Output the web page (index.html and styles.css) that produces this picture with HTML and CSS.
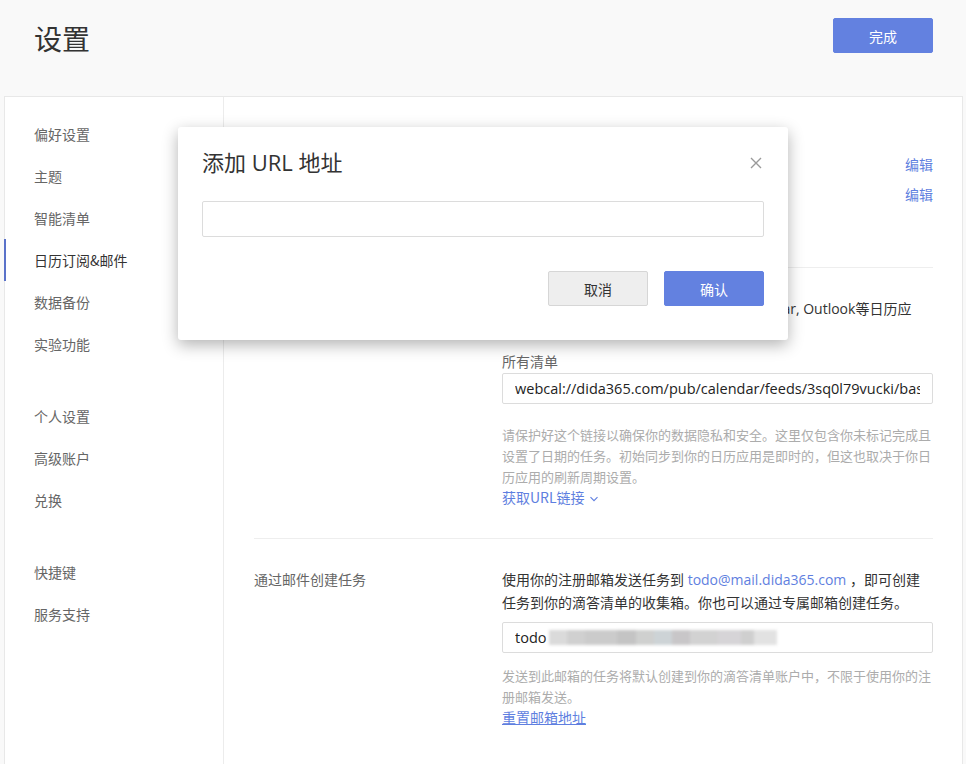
FILE: index.html
```html
<!DOCTYPE html>
<html lang="zh-CN">
<head>
<meta charset="utf-8">
<title>设置</title>
<link rel="stylesheet" href="styles.css">
</head>
<body>
<div class="page">
  <header class="top">
    <h1 class="page-title">设置</h1>
    <button class="btn btn-primary btn-done">完成</button>
  </header>

  <div class="card">
    <nav class="side">
      <ul class="group">
        <li class="nav-item">偏好设置</li>
        <li class="nav-item">主题</li>
        <li class="nav-item">智能清单</li>
        <li class="nav-item active">日历订阅&amp;邮件</li>
        <li class="nav-item">数据备份</li>
        <li class="nav-item">实验功能</li>
      </ul>
      <ul class="group">
        <li class="nav-item">个人设置</li>
        <li class="nav-item">高级账户</li>
        <li class="nav-item">兑换</li>
      </ul>
      <ul class="group">
        <li class="nav-item">快捷键</li>
        <li class="nav-item">服务支持</li>
      </ul>
    </nav>

    <main class="content">
      <section class="sec sec-accounts">
        <div class="sec-label">订阅日历</div>
        <div class="sec-body">
          <div class="acct-row"><span>Google 日历</span><a class="link">编辑</a></div>
          <div class="acct-row"><span>URL 订阅</span><a class="link">编辑</a></div>
        </div>
      </section>

      <section class="sec sec-feed">
        <div class="sec-label">日历订阅</div>
        <div class="sec-body">
          <p class="desc">你可以将以下订阅链接添加到 Google Calendar, Outlook等日历应<br>用中。</p>
          <div class="field-label">所有清单</div>
          <div class="input input-feed"><span class="input-text">webcal://dida365.com/pub/calendar/feeds/3sq0l79vucki/basic.ics</span></div>
          <p class="help help-feed">请保护好这个链接以确保你的数据隐私和安全。这里仅包含你未标记完成且设置了日期的任务。初始同步到你的日历应用是即时的，但这也取决于你日历应用的刷新周期设置。</p>
          <a class="link link-more">获取URL链接 <svg class="chev" width="10" height="10" viewBox="0 0 10 10"><path d="M1.5 3.2 L5 6.7 L8.5 3.2" fill="none" stroke="currentColor" stroke-width="1.1"/></svg></a>
        </div>
      </section>

      <section class="sec sec-mail">
        <div class="sec-label">通过邮件创建任务</div>
        <div class="sec-body">
          <p class="desc">使用你的注册邮箱发送任务到 <a class="link">todo@mail.dida365.com</a> ，即可创建<br>任务到你的滴答清单的收集箱。你也可以通过专属邮箱创建任务。</p>
          <div class="input input-mail"><span class="input-text">todo<span class="blurred"></span></span></div>
          <p class="help help-mail">发送到此邮箱的任务将默认创建到你的滴答清单账户中，不限于使用你的注册邮箱发送。</p>
          <a class="link link-reset">重置邮箱地址</a>
        </div>
      </section>
    </main>
  </div>

  <div class="dialog">
    <h2 class="dialog-title">添加 URL 地址</h2>
    <button class="dialog-close" aria-label="关闭"><svg width="12" height="12" viewBox="0 0 12 12"><path d="M1 1 L11 11 M11 1 L1 11" stroke="#9a9a9a" stroke-width="1.4" fill="none"/></svg></button>
    <div class="dialog-input"></div>
    <div class="dialog-actions">
      <button class="btn btn-default">取消</button>
      <button class="btn btn-primary">确认</button>
    </div>
  </div>
</div>
</body>
</html>
```

FILE: styles.css
```css
* { box-sizing: border-box; }
html, body { margin: 0; padding: 0; }
body {
  background: #f9f9f9;
  font-family: "Open Sans", "Noto Sans CJK SC", sans-serif;
  color: #333;
  font-size: 14px;
  overflow: hidden;
  height: 764px;
}
.page { position: relative; }

.top {
  height: 96px;
  display: flex;
  justify-content: space-between;
  align-items: flex-start;
  padding: 0 33px 0 34px;
}
.page-title {
  margin: 20px 0 0;
  font-size: 28px;
  font-weight: 400;
  line-height: 36px;
  color: #333;
  font-family: "Noto Sans CJK SC", sans-serif;
}
.btn {
  width: 100px;
  height: 35px;
  border: 1px solid transparent;
  border-radius: 2px;
  font-family: "Noto Sans CJK SC", sans-serif;
  font-size: 14px;
  cursor: pointer;
  padding: 0;
}
.btn-primary { background: #6381e0; color: #fff; border-color: #6381e0; }
.btn-default { background: #eeeeee; color: #333; border-color: #d6d6d6; }
.btn-done { margin-top: 18px; }

.card {
  margin: 0 3px 0 4px;
  background: #fff;
  border: 1px solid #e8e8e8;
  display: flex;
  height: 700px;
}
.side {
  width: 219px;
  border-right: 1px solid #ececec;
  padding-top: 16px;
  flex: none;
}
.group { list-style: none; margin: 0 0 30px; padding: 0; }
.nav-item {
  height: 42px;
  line-height: 42px;
  padding-left: 29px;
  color: #666;
  font-family: "Noto Sans CJK SC", sans-serif;
}
.nav-item.active {
  color: #333;
  border-left: 2px solid #5a72c9;
  margin-left: -1px;
  padding-left: 28px;
}

.content { flex: 1; min-width: 0; padding: 0 29px 0 30px; }
.sec {
  display: grid;
  grid-template-columns: 248px minmax(0, 1fr);
  border-top: 1px solid #eeeeee;
}
.sec-body { min-width: 0; }
.sec-accounts { border-top: none; padding: 53px 0 57px; }
.sec-label { color: #666; line-height: 23px; font-family: "Noto Sans CJK SC", sans-serif; }
.sec-accounts .sec-label { line-height: 30px; }
.acct-row { display: flex; justify-content: space-between; line-height: 30px; color: #333; }
.link { color: #5f7fe0; text-decoration: none; cursor: pointer; }

.desc { margin: 0; line-height: 23px; color: #333; }
.sec-feed { padding: 29px 0 30px; }
.sec-mail { padding: 29px 0 30px; }

.field-label { margin-top: 8px; line-height: 20px; color: #666; font-family: "Noto Sans CJK SC", sans-serif; }
.input {
  border: 1px solid #dcdcdc;
  border-radius: 2px;
  height: 31px;
  line-height: 29px;
  padding: 0 12px;
  font-size: 14.5px;
  color: #222;
}
.input-text {
  display: block;
  white-space: nowrap;
  overflow: hidden;
}
.input-feed { margin-top: 2px; }
.input-mail { margin-top: 8px; }
.blurred {
  display: inline-block;
  width: 228px;
  height: 15px;
  vertical-align: -2px;
  margin-left: 2px;
  background: linear-gradient(90deg, #dadada 0 8%, #d0d0d0 8% 16%, #cbcbcb 16% 30%, #c4c4c4 30% 38%, #cfd0cf 38% 46%, #cdd3d6 46% 54%, #c8c6c8 54% 62%, #d2d2d2 62% 74%, #d6d4d7 74% 84%, #cfcfcf 84% 90%, #e2e2e2 90% 100%);
  filter: blur(1.5px);
}
.help {
  margin: 0;
  font-size: 13px;
  color: #acacac;
  line-height: 21px;
  font-family: "Noto Sans CJK SC", sans-serif;
}
.help-feed { margin-top: 20px; }
.help-mail { margin-top: 12px; }
.link-more { display: block; line-height: 21px; font-family: "Noto Sans CJK SC", sans-serif; }
.chev { vertical-align: -1px; margin-left: 1px; }
.link-reset { display: block; line-height: 20px; text-decoration: underline; font-family: "Noto Sans CJK SC", sans-serif; }

.dialog {
  position: absolute;
  left: 178px;
  top: 127px;
  width: 610px;
  height: 213px;
  background: #fff;
  border-radius: 3px;
  box-shadow: 0 5px 16px rgba(0, 0, 0, 0.3);
  padding: 20px 24px 34px;
}
.dialog-title {
  margin: 0;
  font-size: 22px;
  font-weight: 400;
  line-height: 30px;
  color: #333;
}
.dialog-close {
  position: absolute;
  top: 30px;
  right: 26px;
  border: none;
  background: none;
  padding: 0;
  width: 12px;
  height: 12px;
  display: flex;
}
.dialog-input {
  margin-top: 24px;
  height: 36px;
  border: 1px solid #dcdcdc;
  border-radius: 2px;
}
.dialog-actions {
  margin-top: 34px;
  display: flex;
  justify-content: flex-end;
  gap: 16px;
}
```
